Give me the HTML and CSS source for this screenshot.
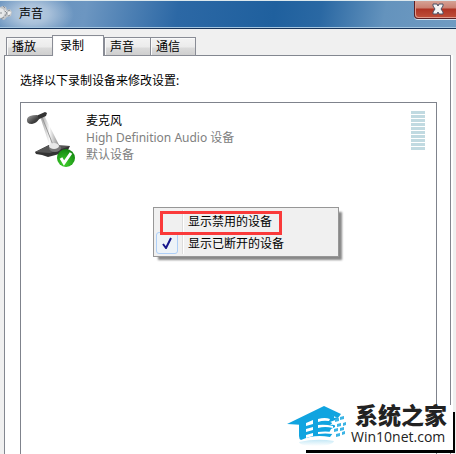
FILE: index.html
```html
<!DOCTYPE html>
<html lang="zh-CN">
<head>
  <meta charset="UTF-8" />
  <title>声音</title>
  <link rel="stylesheet" href="styles.css">
</head>
<body>
  <header class="titlebar">
    <svg class="app-icon" width="13" height="16" viewBox="0 0 13 16">
      <path d="M0 2l3-1 3 1 1 3 3-1 2 3-1 4-4 1-3 3-4-2z" fill="#c3c6c9"/>
      <path d="M0 3l3 1 2 4-2 4-3 1z" fill="#e6e8e9"/>
      <path d="M5 4l2 3-1 3zM8 6l3 1-1 3-2 1z" fill="#f1f1f1"/>
      <path d="M3 1l2 2M5 6l2 2-2 3M1 14l3-2M8 6l2-1M8 11l2-1M0 8h2" stroke="#8b9095" fill="none"/>
    </svg>
    <h1>声音</h1>
    <button class="close" aria-label="关闭">
      <svg width="12" height="12" viewBox="0 0 12 12">
        <path d="M1 1h4l1 2 1-2h4v2L9 6l2 3v2H7L6 9l-1 2H1V9l2-3-2-3z" fill="#f4f4f4" stroke="#4c5267"/>
      </svg>
    </button>
  </header>

  <nav class="tabs">
    <button class="tab">播放</button>
    <button class="tab active">录制</button>
    <button class="tab">声音</button>
    <button class="tab last">通信</button>
  </nav>

  <main class="panel">
    <p class="hint">选择以下录制设备来修改设置:</p>
    <div class="devices">
      <div class="device">
        <svg class="mic" width="52" height="56" viewBox="0 0 52 56">
          <defs>
            <linearGradient id="stand" x1="0" x2="1" y1="0" y2="0">
              <stop offset="0" stop-color="#999"/>
              <stop offset=".5" stop-color="#fafafa"/>
              <stop offset="1" stop-color="#888"/>
            </linearGradient>
            <linearGradient id="head" x1="0" x2="1" y1="0" y2="1">
              <stop offset="0" stop-color="#aaa"/>
              <stop offset=".6" stop-color="#444"/>
              <stop offset="1" stop-color="#222"/>
            </linearGradient>
            <radialGradient id="ok" cx=".4" cy=".8" r=".8">
              <stop offset="0" stop-color="#3fd02c"/>
              <stop offset="1" stop-color="#12850f"/>
            </radialGradient>
          </defs>
          <path d="M10 41l14-7 21 1-3 6-19 5-6-2-6-1z" fill="#333"/>
          <path d="M10 41l14-7 21 1-20 7z" fill="#555"/>
          <path d="M15 5l4-1 15 30-9 2z" fill="url(#stand)"/>
          <path d="M17 6l11 28" stroke="#999" fill="none"/>
          <ellipse cx="30" cy="37" rx="6" ry="4" fill="#777"/>
          <ellipse cx="29" cy="35" rx="5" ry="3" fill="#e8e8e8"/>
          <path d="M11 5l9-4 2 1-1 3-9 4z" fill="#333"/>
          <path d="M2 8q1-4 10-4l2 4q-2 4-7 5-6 0-5-5z" fill="url(#head)"/>
          <circle cx="41" cy="47" r="9" fill="url(#ok)"/>
          <path d="M36 47l3 5 7-10" fill="none" stroke="#fff" stroke-width="3"/>
        </svg>
        <div class="info">
          <strong>麦克风</strong>
          <span>High Definition Audio 设备</span>
          <span>默认设备</span>
        </div>
        <div class="meter">
          <i></i><i></i><i></i><i></i><i></i><i></i><i></i><i></i><i></i><i></i>
        </div>
      </div>
    </div>
  </main>

  <div class="menu">
    <button class="menu-item marked"><span class="check"></span>显示禁用的设备</button>
    <button class="menu-item">
      <span class="check on">
        <svg width="10" height="12" viewBox="0 0 10 12">
          <path d="M1 7l3 4 5-10" fill="none" stroke="#16168c" stroke-width="2"/>
        </svg>
      </span>显示已断开的设备
    </button>
  </div>

  <div class="shade"></div>
  <div class="watermark">
    <svg width="62" height="44" viewBox="0 0 62 44">
      <defs>
        <linearGradient id="fade" x1="0" x2="0" y1="0" y2="1">
          <stop offset="0" stop-color="#c4e8f6"/>
          <stop offset="1" stop-color="#fff"/>
        </linearGradient>
      </defs>
      <path d="M1 19L38 1l17 8-3 4-14-6-17 9-3 4z" fill="#10a4e0"/>
      <path d="M13 17l25-12 10 6v2q5-2 4 1l-8 3q4 1 0 3 6-1 5 2l-4 2-2 4 4 0-3 4q-16-3-29 3-2-1-2-4z" fill="#10a4e0"/>
      <path d="M20 18l7-3v4l-7 2zM20 24l7-2v3l-7 2zM20 30l7-2v3l-7 2z" fill="#fff"/>
      <path d="M32 14q7-2 12 0l-1 2q-6-1-11 1zM32 20q7-1 15 1v2q-8-2-15 0zM32 27q7-1 15 0v2q-8-1-15 0z" fill="#fff"/>
      <path d="M49 14l4-1v3l-4 1zM54 12l4-1v3l-4 1zM51 19l4-1v3l-4 1zM57 18l3-1v3l-3 1zM48 24l4-1v3l-4 1zM54 23l4-1v3l-4 1zM50 29l4-1v3l-4 1zM56 27l3-1v3l-3 1z" fill="#3bb4e5"/>
      <path d="M13 37q18-4 35-1-2 5-18 5T13 37z" fill="url(#fade)"/>
    </svg>
    <div class="brand">
      <b>系统之家</b>
      <span>Win10net.com</span>
    </div>
  </div>
</body>
</html>
```

FILE: styles.css
```css
*,
*::after {
  box-sizing: border-box;
}

body {
  display: flex;
  flex-direction: column;
  min-height: 100vh;
  margin: 0;
  overflow: hidden;
  position: relative;
  background: #f0f0f0;
  color: #000;
  font: 12px/17px "Noto Sans", "Noto Sans CJK SC", sans-serif;
}

button {
  margin: 0;
  padding: 0;
  border: 0;
  font: inherit;
  color: inherit;
}

/* Title bar */
.titlebar {
  display: flex;
  align-items: flex-start;
  height: 29px;
  border-top: 1px solid #dce8ed;
  border-bottom: 1px solid #17345a;
  box-shadow: inset 0 -1px #a5c6e0;
  background: radial-gradient(ellipse 42px 24px at 32px 13px, #bccfe2, #a9c1da 40%, rgba(130, 165, 202, 0)),
    linear-gradient(100deg, #6590bd 0, #6c96c1 19%, #2c68a5 39%, #1f609e 60%, #2a68a3 70%, #6493bd 84%, #709bc2 100%);
}

.app-icon {
  margin-top: 4px;
}

h1 {
  flex: 1;
  margin: 4px 0 0 6px;
  font-size: 12px;
  font-weight: normal;
  line-height: 17px;
}

.close {
  display: flex;
  width: 43px;
  height: 18px;
  margin-right: -1px;
  padding: 2px 0 0 17px;
  border: 1px solid #5b2025;
  border-top: 0;
  border-radius: 0 0 0 4px;
  box-shadow: inset 1px -1px #e09a8c, 0 1px #d5e2ec;
  background: linear-gradient(#d5a295, #ca8071 7px, #ae3324 8px, #c0503a);
}

/* Tabs */
.tabs {
  display: flex;
  align-items: flex-end;
  margin: 6px 0 -1px 6px;
  position: relative;
}

.tab {
  width: 46px;
  height: 19px;
  padding-left: 5px;
  border: 1px solid #898c95;
  border-right-width: 0;
  background: linear-gradient(#f3f3f3, #ebebeb 9px, #dadada 10px, #cfcfcf);
  box-shadow: inset 1px 1px #fafafa;
  text-align: left;
}

.tab.active {
  width: 52px;
  height: 21px;
  padding: 0 0 2px 7px;
  border-width: 1px 1px 0;
  background: #fff;
}

.tab.last {
  border-right-width: 1px;
}

/* Page */
.panel {
  flex: 1;
  display: flex;
  flex-direction: column;
  margin: 0 5px 0 4px;
  padding: 16px 13px 0 15px;
  border: 1px solid #838790;
  border-bottom: 0;
  background: #fff;
  box-shadow: 2px 0 #fff;
}

.hint {
  margin: 0 0 13px;
}

.devices {
  flex: 1;
  border: 1px solid #7f838c;
  border-bottom: 0;
}

.device {
  display: flex;
  align-items: flex-start;
  padding: 8px 11px 0 4px;
}

.info {
  flex: 1;
  margin: 1px 0 0 9px;
  color: #808080;
}

.info strong,
.info span {
  display: block;
}

.info strong {
  color: #000;
  font-weight: normal;
}

.meter {
  display: grid;
  gap: 1px;
  width: 14px;
}

.meter i {
  height: 3px;
  background: #c1dae1;
}

/* Context menu */
.menu {
  position: absolute;
  left: 153px;
  top: 207px;
  width: 186px;
  padding: 2px;
  border: 1px solid #979797;
  background: #f0f0f0;
  box-shadow: 4px 4px 2px -1px #888;
}

.menu-item {
  display: flex;
  align-items: center;
  position: relative;
  width: 100%;
  height: 22px;
  background: linear-gradient(90deg, transparent 26px, #dcdcdc 26px, #dcdcdc 27px, #fff 27px, #fff 28px, transparent 28px);
}

.check {
  display: flex;
  align-items: center;
  justify-content: center;
  width: 22px;
  height: 22px;
  margin-right: 10px;
}

.check.on {
  border: 1px solid #aecff7;
  border-radius: 3px;
  background: #edf3f8;
}

.marked::after {
  content: "";
  position: absolute;
  left: 4px;
  top: 1px;
  width: 122px;
  height: 24px;
  border: 3px solid #fa3a3a;
  z-index: 1;
}

/* Site mark in the corner */
.shade {
  position: absolute;
  right: 1px;
  bottom: 1px;
  width: 149px;
  height: 41px;
  border: 2px solid #000;
  border-width: 2px 2px 3px;
  background: #fff;
}

.watermark {
  display: flex;
  position: absolute;
  right: 3px;
  bottom: 4px;
  padding-right: 6px;
  background: #fff;
}

.brand {
  margin-left: 3px;
  color: #222;
  white-space: nowrap;
}

.brand b,
.brand span {
  display: block;
}

.brand b {
  margin-left: 4px;
  font: 900 23px/19px "Noto Sans CJK SC", sans-serif;
}

.brand span {
  font: 14px/26px "Open Sans", sans-serif;
}
```
